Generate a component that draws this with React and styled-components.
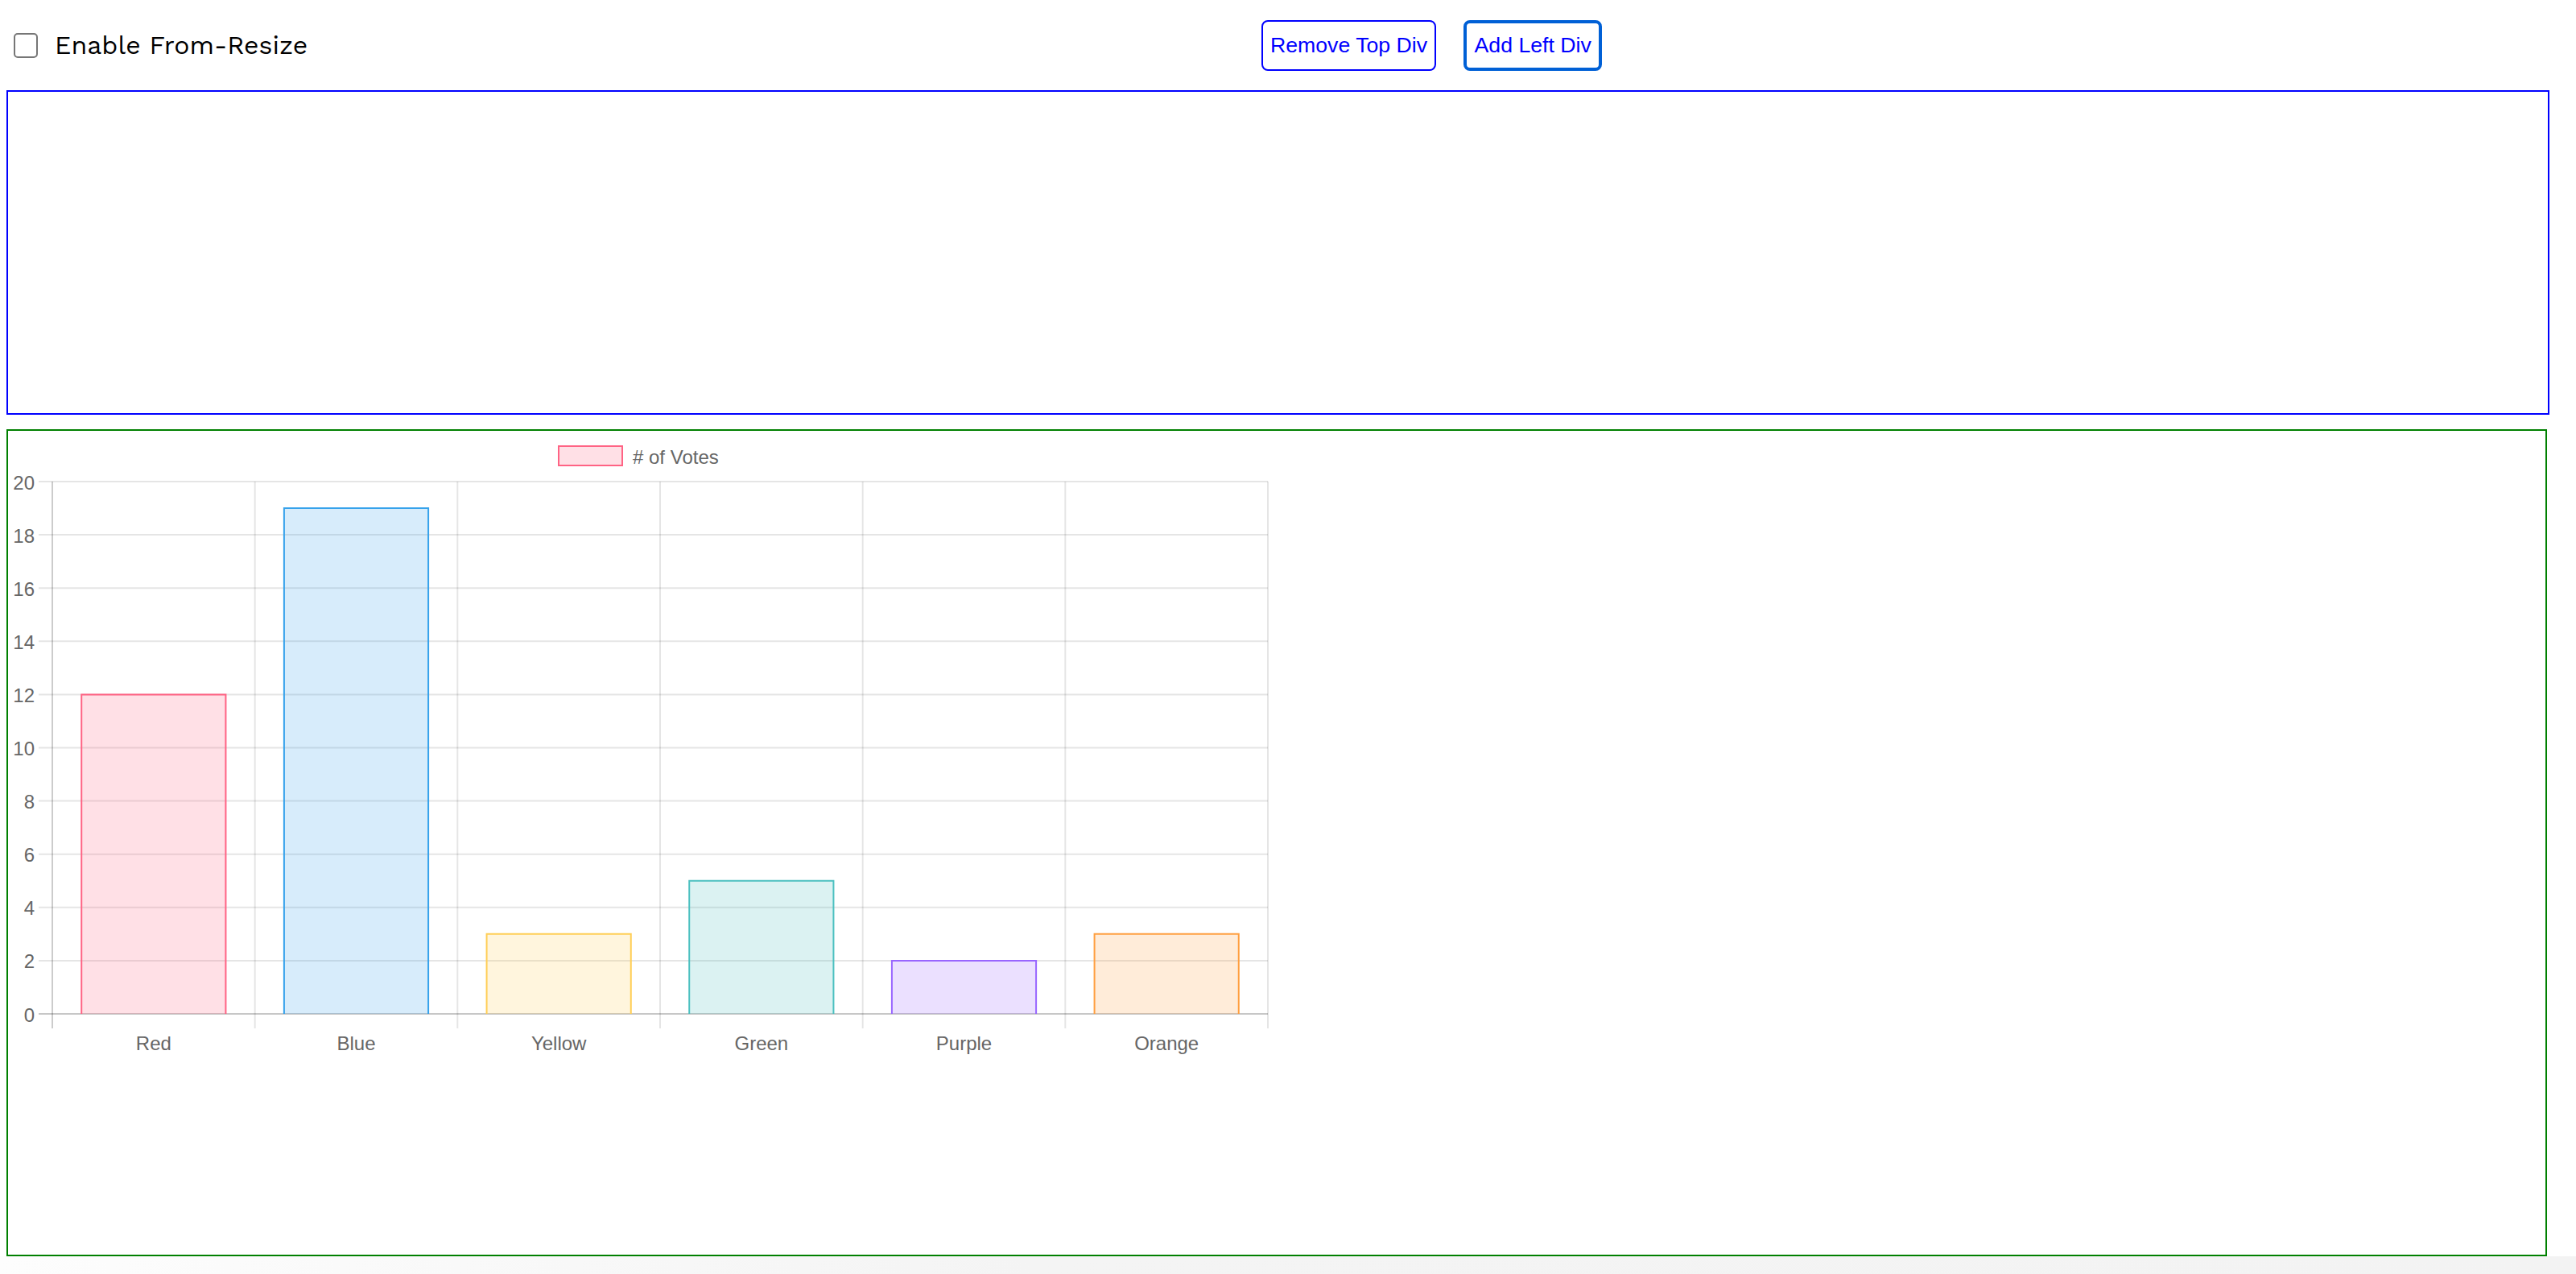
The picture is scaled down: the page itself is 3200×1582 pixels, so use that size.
import styled, { createGlobalStyle } from "styled-components";

const GlobalStyle = createGlobalStyle`
  html, body {
    margin: 0;
    padding: 0;
    background: #fff;
  }
  body {
    overflow: hidden;
    font-family: "Liberation Sans", Arial, sans-serif;
  }
`;

const votes = [
  { label: "Red", value: 12, fill: "rgba(255, 99, 132, 0.2)", stroke: "rgb(255, 99, 132)" },
  { label: "Blue", value: 19, fill: "rgba(54, 162, 235, 0.2)", stroke: "rgb(54, 162, 235)" },
  { label: "Yellow", value: 3, fill: "rgba(255, 206, 86, 0.2)", stroke: "rgb(255, 206, 86)" },
  { label: "Green", value: 5, fill: "rgba(75, 192, 192, 0.2)", stroke: "rgb(75, 192, 192)" },
  { label: "Purple", value: 2, fill: "rgba(153, 102, 255, 0.2)", stroke: "rgb(153, 102, 255)" },
  { label: "Orange", value: 3, fill: "rgba(255, 159, 64, 0.2)", stroke: "rgb(255, 159, 64)" },
];

// plot area in page pixels
const CHART = { left: 65, right: 1575, top: 598, bottom: 1259, max: 20 };

function VotesChart() {
  const { left, right, top, bottom, max } = CHART;
  const unit = (bottom - top) / max;
  const cat = (right - left) / votes.length;
  const barW = cat * 0.9 * 0.8;
  const ticks = [];
  for (let t = 0; t <= max; t += 2) ticks.push(t);

  return (
    <ChartSvg viewBox="10 535 1600 780" width="1600" height="780">
      <rect x="694" y="554" width="79" height="24" fill="rgba(255, 99, 132, 0.2)" stroke="rgb(255, 99, 132)" strokeWidth="2" />
      <text x="786" y="567" dominantBaseline="central">
        # of Votes
      </text>

      {ticks.map((t) => {
        const y = bottom - t * unit;
        return (
          <g key={t}>
            <line
              x1="48"
              x2={right}
              y1={y}
              y2={y}
              stroke={t === 0 ? "rgba(0,0,0,0.22)" : "rgba(0,0,0,0.1)"}
              strokeWidth="2"
            />
            <text x="43" y={y + 1} textAnchor="end" dominantBaseline="central">
              {t}
            </text>
          </g>
        );
      })}

      {[0, 1, 2, 3, 4, 5, 6].map((j) => {
        const x = left + j * cat;
        return (
          <line
            key={j}
            x1={x}
            x2={x}
            y1={top}
            y2={bottom + 18}
            stroke={j === 0 ? "rgba(0,0,0,0.2)" : "rgba(0,0,0,0.1)"}
            strokeWidth="2"
          />
        );
      })}

      {votes.map((v, i) => {
        const c = left + (i + 0.5) * cat;
        const x0 = c - barW / 2 + 1;
        const x1 = c + barW / 2 - 1;
        const y = bottom - v.value * unit;
        return (
          <g key={v.label}>
            <rect x={x0} y={y} width={x1 - x0} height={bottom - y} fill={v.fill} />
            <path
              d={`M${x0} ${bottom} V${y} H${x1} V${bottom}`}
              fill="none"
              stroke={v.stroke}
              strokeWidth="2"
            />
            <text x={c} y={1295} textAnchor="middle" dominantBaseline="central">
              {v.label}
            </text>
          </g>
        );
      })}
    </ChartSvg>
  );
}

function App() {
  return (
    <>
      <GlobalStyle />
      <Page>
        <TopBar>
          <ResizeToggle>
            <CheckBox type="checkbox" />
            <span>Enable From-Resize</span>
          </ResizeToggle>
          <Actions>
            <ActionButton>Remove Top Div</ActionButton>
            <ActionButton $focused>Add Left Div</ActionButton>
          </Actions>
        </TopBar>
        <TopPanel />
        <ChartPanel>
          <VotesChart />
        </ChartPanel>
        <BottomFade />
      </Page>
    </>
  );
}

export default App;

const Page = styled.div`
  width: 3200px;
  min-height: 1582px;
  display: flex;
  flex-direction: column;
`;

const TopBar = styled.header`
  height: 112px;
  display: flex;
  align-items: center;
  padding-left: 17px;
  box-sizing: border-box;
`;

const ResizeToggle = styled.label`
  width: 1550px;
  display: flex;
  align-items: center;
  gap: 21px;
  font-family: "Work Sans", Inter, "Liberation Sans", sans-serif;
  font-size: 32px;
  color: #000;
`;

const CheckBox = styled.input`
  appearance: none;
  margin: 0;
  width: 30px;
  height: 31px;
  border: 2px solid #767676;
  border-radius: 5px;
  background: #fff;
  box-sizing: border-box;
`;

const Actions = styled.div`
  display: flex;
  align-items: center;
  gap: 34px;
`;

const ActionButton = styled.button`
  height: 63px;
  padding: 0 ${(p) => (p.$focused ? "9.5px" : "9px")};
  box-sizing: border-box;
  background: #fff;
  border: ${(p) => (p.$focused ? "4px solid #0060d6" : "2px solid #0000ff")};
  border-radius: 8px;
  color: #0000ff;
  font-family: "Liberation Sans", Arial, sans-serif;
  font-size: 26.67px;
  white-space: nowrap;
`;

const TopPanel = styled.div`
  margin-left: 8px;
  width: 3159px;
  height: 403px;
  box-sizing: border-box;
  border: 2px solid #0000ff;
`;

const ChartPanel = styled.div`
  margin: 18px 0 0 8px;
  width: 3156px;
  height: 1027px;
  box-sizing: border-box;
  border: 2px solid #008000;
  overflow: hidden;
`;

const ChartSvg = styled.svg`
  display: block;
  text {
    font-family: "Liberation Sans", Helvetica, Arial, sans-serif;
    font-size: 24px;
    fill: #666;
  }
`;

const BottomFade = styled.div`
  height: 22px;
  background: linear-gradient(to right, #fdfdfd, #f4f4f4 40%, #f3f3f3);
`;
